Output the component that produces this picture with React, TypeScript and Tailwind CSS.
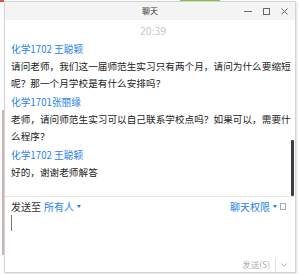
import React from "react";

const font = { fontFamily: '"Noto Sans CJK SC", "Noto Sans", sans-serif' };

type Msg = { name: string; lines: string[] };

const messages: Msg[] = [
  {
    name: "化学1702 王聪颖",
    lines: [
      "请问老师，我们这一届师范生实习只有两个月，请问为什么要缩短",
      "呢？那一个月学校是有什么安排吗？",
    ],
  },
  {
    name: "化学1701张丽缘",
    lines: [
      "老师，请问师范生实习可以自己联系学校点吗？如果可以，需要什",
      "么程序？",
    ],
  },
  { name: "化学1702 王聪颖", lines: ["好的，谢谢老师解答"] },
];

function Caret() {
  return <span className="ml-[3px] block w-0 h-0 border-l-[2.5px] border-r-[2.5px] border-t-[3px] border-l-transparent border-r-transparent border-t-[#1f7fe6]" />;
}

export default function App() {
  return (
    <div className="relative w-[300px] h-[274px] bg-white overflow-hidden" style={font}>
      {/* bits of other windows behind */}
      <div className="absolute left-0 top-0 w-[4px] h-[2px] bg-[#d9534f]" />
      <div className="absolute left-[180px] top-0 w-[40px] h-[2px] bg-[#8bbf4a]" />
      <div className="absolute left-[2px] top-[110px] w-[2px] h-[145px] bg-[#b08080] opacity-60" />

      <div className="absolute left-[4px] top-[1px] w-[292px] h-[272px] flex flex-col border border-[#d4d4d4] bg-white shadow-[1px_1px_2px_rgba(0,0,0,0.12)]">
        {/* title bar */}
        <div className="relative h-[18px] shrink-0 bg-[#f4f4f4] flex items-center justify-center">
          <span className="text-[8px] leading-none text-[#333]">聊天</span>
          <div className="absolute right-[6px] top-0 h-full flex items-center gap-[11px] text-[#555]">
            <span className="block w-[8px] h-px bg-[#666]" />
            <span className="block w-[7px] h-[7px] border border-[#666]" />
            <svg width="7" height="7" viewBox="0 0 7 7" className="mr-[1px]">
              <path d="M0.5 0.5L6.5 6.5M6.5 0.5L0.5 6.5" stroke="#666" strokeWidth="1" />
            </svg>
          </div>
        </div>

        {/* messages */}
        <div className="relative h-[177px] shrink-0 border-b border-[#e6e6e6] pt-[2px] pl-[6px]">
          <div className="h-[18px] leading-[18px] text-center text-[10.5px] text-[#c8c8c8]">20:39</div>
          {messages.map((m, i) => (
            <div key={i} className={i > 0 ? "mt-px" : ""}>
              <div className="h-[18px] leading-[18px] text-[9.7px] text-[#1f7fe6] whitespace-nowrap">{m.name}</div>
              {m.lines.map((l, j) => (
                <div key={j} className="h-[17px] leading-[17px] text-[9.6px] tracking-[0.05px] text-[#222] whitespace-nowrap">
                  {l}
                </div>
              ))}
            </div>
          ))}
          <div className="absolute right-[1px] top-[120px] w-[3px] h-[56px] bg-[#3c3c50] rounded-[1px]" />
        </div>

        {/* input area */}
        <div className="flex-1 flex flex-col pl-[6px]">
          <div className="h-[18px] flex items-center justify-between pr-[9px] text-[10px]">
            <div className="flex items-center">
              <span className="text-[#333]">发送至</span>
              <span className="ml-[3px] text-[#1f7fe6]">所有人</span>
              <Caret />
            </div>
            <div className="flex items-center">
              <span className="text-[#1f7fe6]">聊天权限</span>
              <Caret />
              <span className="ml-[3px] block w-[6px] h-[7px] border border-[#aaa]" />
            </div>
          </div>
          <div className="w-px h-[16px] bg-[#777]" />
          <div className="flex-1" />
          <div className="h-[15px] flex items-center justify-end pr-[8px] text-[8.5px] text-[#b0b0b0]">
            <span>发送(S)</span>
            <span className="ml-[5px] w-px h-[14px] bg-[#e0e0e0]" />
            <svg width="6" height="4" viewBox="0 0 6 4" className="ml-[5px]">
              <path d="M0.5 0.5L3 3L5.5 0.5" stroke="#aaa" strokeWidth="0.9" fill="none" />
            </svg>
          </div>
        </div>
      </div>
    </div>
  );
}
